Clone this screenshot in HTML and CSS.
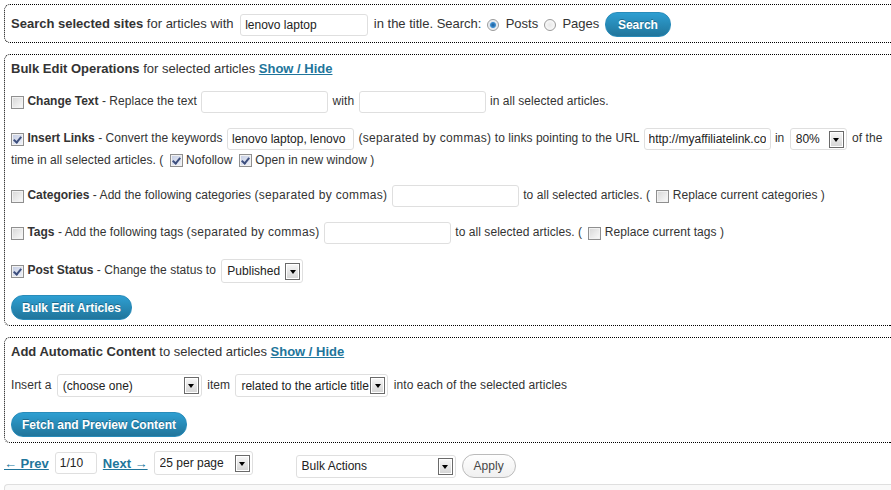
FILE: index.html
```html
<!DOCTYPE html>
<html lang="en">
  <head>
    <meta charset="UTF-8" />
    <meta name="viewport" content="width=device-width, initial-scale=1.0" />
    <link rel="stylesheet" href="styles.css">
    <title>Bulk Edit Articles</title>
  </head>
  <body>
    <div class="panel search-panel">
      <strong>Search selected sites</strong> for articles with
      <input class="text" type="text" value="lenovo laptop">
      in the title. Search:
      <input class="radio" type="radio" name="type" checked> Posts
      <input class="radio" type="radio" name="type"> Pages
      <button class="btn-primary">Search</button>
    </div>

    <div class="panel">
      <h3><strong>Bulk Edit Operations</strong> for selected articles <a href="#">Show / Hide</a></h3>

      <p class="op">
        <input class="cb" type="checkbox"> <b>Change Text</b> - Replace the text
        <input class="text" type="text"> with <input class="text" type="text"> in all selected articles.
      </p>

      <p class="op">
        <input class="cb" type="checkbox" checked> <b>Insert Links</b> - Convert the keywords
        <input class="text" type="text" value="lenovo laptop, lenovo laptops">
        <span class="hint">(separated by commas)</span> to links pointing to the URL
        <input class="text" type="text" value="http://myaffiliatelink.com"> in
        <span class="dd w-pct"><select><option>80%</option></select><i></i></span>
        of the time in all selected articles. (
        <label class="opt"><input class="cb" type="checkbox" checked> Nofollow</label>
        <label class="opt"><input class="cb" type="checkbox" checked> Open in new window</label> )
      </p>

      <p class="op">
        <input class="cb" type="checkbox"> <b>Categories</b> - Add the following categories
        <span class="hint">(separated by commas)</span>
        <input class="text" type="text"> to all selected articles. (
        <label class="opt"><input class="cb" type="checkbox"> Replace current categories</label> )
      </p>

      <p class="op">
        <input class="cb" type="checkbox"> <b>Tags</b> - Add the following tags
        <span class="hint">(separated by commas)</span>
        <input class="text" type="text"> to all selected articles. (
        <label class="opt"><input class="cb" type="checkbox"> Replace current tags</label> )
      </p>

      <p class="op status">
        <input class="cb" type="checkbox" checked> <b>Post Status</b> - Change the status to
        <span class="dd w-status"><select><option>Published</option></select><i></i></span>
      </p>

      <p class="actions"><button class="btn-primary">Bulk Edit Articles</button></p>
    </div>

    <div class="panel">
      <h3><strong>Add Automatic Content</strong> to selected articles <a href="#">Show / Hide</a></h3>

      <p class="op">
        Insert a
        <span class="dd w-choose"><select><option>(choose one)</option></select><i></i></span>
        item
        <span class="dd w-related"><select><option>related to the article title</option></select><i></i></span>
        into each of the selected articles
      </p>

      <p class="actions"><button class="btn-primary">Fetch and Preview Content</button></p>
    </div>

    <div class="tablenav">
      <div class="pages">
        <a href="#">&larr; Prev</a>
        <input class="text page-num" type="text" value="1/10">
        <a href="#">Next &rarr;</a>
        <span class="dd w-perpage"><select><option>25 per page</option></select><i></i></span>
      </div>
      <div class="bulk">
        <span class="dd w-bulk"><select><option>Bulk Actions</option></select><i></i></span>
        <button class="btn">Apply</button>
      </div>
    </div>

    <div class="table-head"></div>
  </body>
</html>
```

FILE: styles.css
```css
body {
  margin: 0;
  padding-top: 4px;
  overflow: hidden;
  font-family: "Liberation Sans", Arial, sans-serif;
  font-size: 13px;
  color: #333;
  background-color: #fff;
}

a {
  color: #21759b;
  font-weight: bold;
}

.panel {
  margin: 0 0 11px 4px;
  padding: 5px 0 5px 6px;
  border: 1px dotted #000;
  border-right: 0;
  border-radius: 6px 0 0 6px;
}

.search-panel {
  padding-top: 6px;
  line-height: 25px;
}

h3 {
  margin: 0 0 13px;
  font-size: 13px;
  font-weight: normal;
  line-height: 18px;
}

.op {
  margin: 0 0 15px;
  font-size: 12px;
  line-height: 20px;
  letter-spacing: 0.05px;
}

.op b {
  letter-spacing: 0;
}

.op .hint {
  letter-spacing: 0.33px;
}

.op.status {
  margin-bottom: 12px;
}

.opt .cb {
  margin-left: 3px;
}

.actions {
  margin: 0;
}

.text {
  box-sizing: border-box;
  width: 127px;
  height: 22px;
  margin: 0 1px;
  padding: 0 4px;
  border: 1px solid #dfdfdf;
  border-radius: 3px;
  font-family: inherit;
  font-size: 12px;
  letter-spacing: 0;
  color: #222;
  vertical-align: middle;
}

.search-panel .text {
  width: 128px;
  margin: 0 2px 0 3px;
}

.radio {
  -webkit-appearance: none;
  appearance: none;
  width: 12px;
  height: 12px;
  margin: 0 3px 0 2px;
  border: 1px solid #9a9a9a;
  border-radius: 50%;
  background: radial-gradient(circle, #e9e9e9, #fff);
  vertical-align: middle;
}

.radio:checked {
  background: radial-gradient(circle, #1d5a96 0, #3d8fd1 2.5px, #dfe6ee 3.5px, #fff 6px);
}

.cb {
  -webkit-appearance: none;
  appearance: none;
  box-sizing: border-box;
  width: 13px;
  height: 13px;
  margin: 0;
  border: 1px solid #8f8f8f;
  background: linear-gradient(135deg, #d6d6d6, #fbfbfb);
  box-shadow: inset 0 0 0 1px #f2f2f2;
  vertical-align: middle;
}

.cb:checked {
  background: linear-gradient(135deg, #c2cbe2, #f2f4fa);
}

.cb:checked::after {
  content: "";
  display: block;
  width: 3px;
  height: 6px;
  margin: 1px 0 0 3px;
  border: solid #3d4f7e;
  border-width: 0 2px 2px 0;
  transform: rotate(40deg);
}

.dd {
  display: inline-flex;
  align-items: center;
  box-sizing: border-box;
  height: 22px;
  margin: 0 2px;
  border: 1px solid #dfdfdf;
  border-radius: 3px;
  background-color: #fff;
  font-size: 12px;
  letter-spacing: 0;
  vertical-align: middle;
  line-height: normal;
}

.dd select {
  -webkit-appearance: none;
  appearance: none;
  flex: 1;
  min-width: 0;
  height: 100%;
  padding: 0 0 0 5px;
  border: 0;
  background: transparent;
  font: inherit;
  color: #222;
  outline: none;
}

.dd i {
  display: flex;
  align-items: center;
  justify-content: center;
  box-sizing: border-box;
  width: 15px;
  height: 17px;
  margin-right: 2px;
  border: 1px solid #6a6a6a;
  background: linear-gradient(#f8f8f8, #d4d4d4);
  box-shadow: inset 0 0 0 1px #fff;
}

.dd i::after {
  content: "";
  border-top: 4px solid #000;
  border-left: 3px solid transparent;
  border-right: 3px solid transparent;
  margin-top: 1px;
}

.w-pct { width: 57px; }
.w-status { width: 82px; height: 24px; }
.w-choose { width: 145px; height: 23px; }
.w-related { width: 153px; height: 23px; }
.w-perpage { width: 99px; height: 24px; margin: 0; }
.w-bulk { width: 160px; height: 23px; margin: 0; }

.btn-primary {
  height: 25px;
  padding: 0 10px;
  border: 1px solid #298cba;
  border-radius: 12px;
  background: linear-gradient(#2e9fd2, #21759b);
  color: #fff;
  font-family: "Liberation Sans", Arial, sans-serif;
  font-size: 12px;
  font-weight: bold;
  text-shadow: 0 -1px 0 rgba(0, 0, 0, 0.3);
  vertical-align: middle;
}

.search-panel .btn-primary {
  margin-left: 2px;
  padding: 0 12px;
}

.tablenav {
  display: flex;
  align-items: flex-start;
  gap: 43px;
  margin: -3px 0 0 4px;
}

.pages {
  display: flex;
  align-items: center;
  gap: 6px;
}

.page-num {
  width: 42px;
  margin: 0;
}

.bulk {
  display: flex;
  align-items: center;
  gap: 6px;
  margin-top: 3px;
}

.btn {
  height: 24px;
  padding: 0 11px;
  border: 1px solid #bbb;
  border-radius: 12px;
  background: linear-gradient(#fefefe, #f0f0f0);
  color: #464646;
  font-family: "Liberation Sans", Arial, sans-serif;
  font-size: 12px;
}

.table-head {
  height: 30px;
  margin: 6px 0 0 4px;
  border: 1px solid #dfdfdf;
  border-right: 0;
  border-radius: 4px 0 0 0;
  background-color: #f9f9f9;
}
```
